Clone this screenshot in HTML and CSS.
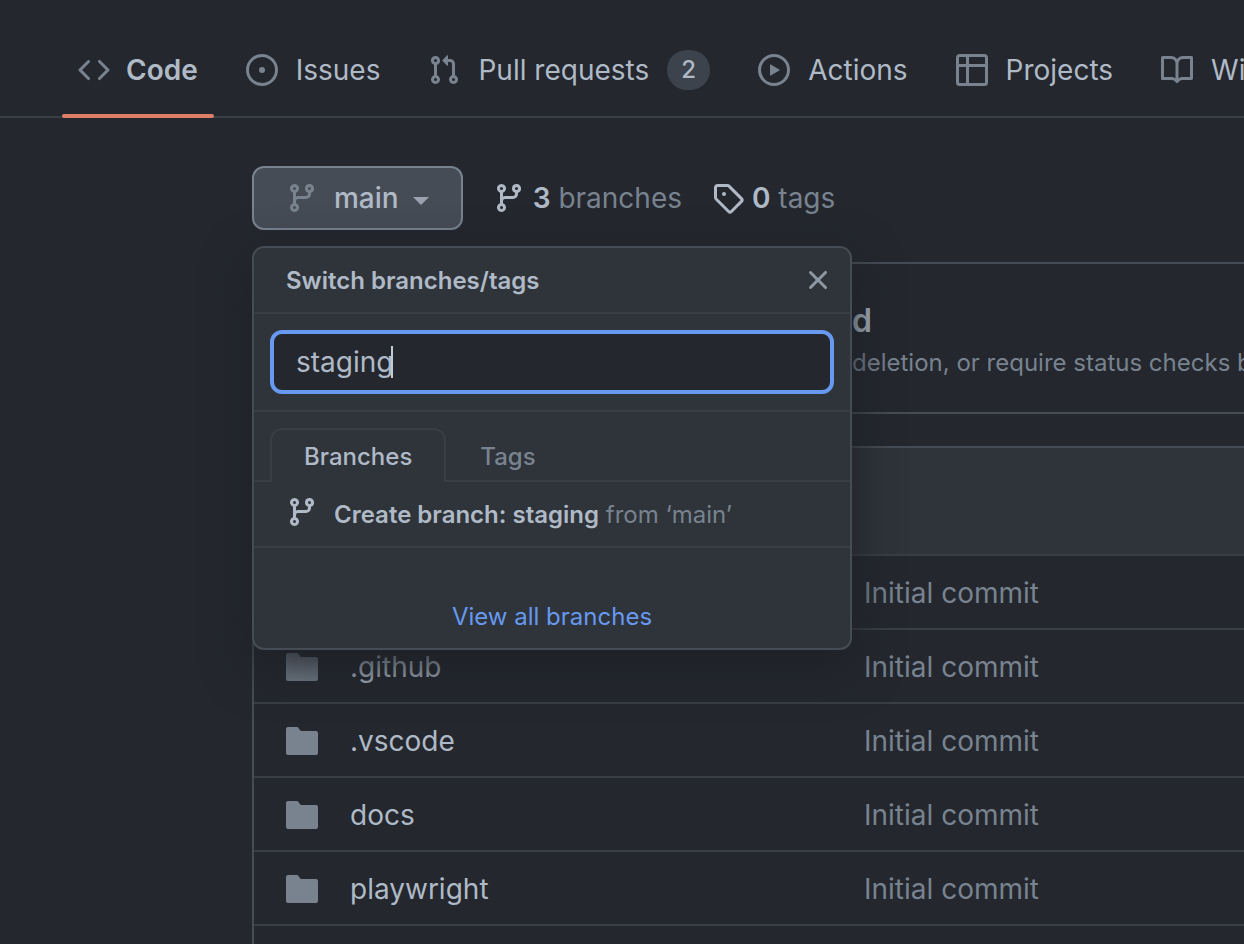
FILE: index.html
```html
<!DOCTYPE html>
<html lang="en">
<head>
<meta charset="utf-8">
<title>Code</title>
<link rel="stylesheet" href="styles.css">
</head>
<body>
<svg class="sprite" aria-hidden="true">
  <symbol id="code" viewBox="0 0 16 16"><path d="M4.72 3.22a.75.75 0 011.06 1.06L2.06 8l3.72 3.72a.75.75 0 11-1.06 1.06L.47 8.53a.75.75 0 010-1.06l4.25-4.25zm6.56 0a.75.75 0 10-1.06 1.06L13.94 8l-3.72 3.72a.75.75 0 101.06 1.06l4.25-4.25a.75.75 0 000-1.06l-4.25-4.25z"/></symbol>
  <symbol id="issue" viewBox="0 0 16 16"><path d="M8 9.5a1.5 1.5 0 100-3 1.5 1.5 0 000 3z"/><path d="M8 0a8 8 0 100 16A8 8 0 008 0zM1.5 8a6.5 6.5 0 1113 0 6.5 6.5 0 01-13 0z"/></symbol>
  <symbol id="pull" viewBox="0 0 16 16"><path d="M7.177 3.073L9.573.677A.25.25 0 0110 .854v4.792a.25.25 0 01-.427.177L7.177 3.427a.25.25 0 010-.354zM3.75 2.5a.75.75 0 100 1.5.75.75 0 000-1.5zm-2.25.75a2.25 2.25 0 113 2.122v5.256a2.251 2.251 0 11-1.5 0V5.372A2.25 2.25 0 011.5 3.25zM11 2.5h-1V4h1a1 1 0 011 1v5.628a2.251 2.251 0 101.5 0V5A2.5 2.5 0 0011 2.5zm1 10.25a.75.75 0 111.5 0 .75.75 0 01-1.5 0zM3.75 12a.75.75 0 100 1.5.75.75 0 000-1.5z"/></symbol>
  <symbol id="play" viewBox="0 0 16 16"><path d="M1.5 8a6.5 6.5 0 1113 0 6.5 6.5 0 01-13 0zM8 0a8 8 0 100 16A8 8 0 008 0zM6.379 5.227A.25.25 0 006 5.442v5.117a.25.25 0 00.379.214l4.264-2.559a.25.25 0 000-.428L6.379 5.227z"/></symbol>
  <symbol id="table" viewBox="0 0 16 16"><path d="M0 1.75C0 .784.784 0 1.75 0h12.5C15.216 0 16 .784 16 1.75v12.5A1.75 1.75 0 0114.25 16H1.75A1.75 1.75 0 010 14.25V1.75zM1.5 6.5v7.75c0 .138.112.25.25.25H5v-8H1.5zM6.5 6.5v8h7.75a.25.25 0 00.25-.25V6.5h-8zM14.5 5V1.75a.25.25 0 00-.25-.25H6.5V5h8zM5 5V1.5H1.75a.25.25 0 00-.25.25V5H5z"/></symbol>
  <symbol id="book" viewBox="0 0 16 16"><path d="M0 1.75A.75.75 0 01.75 1h4.253c1.227 0 2.317.59 3 1.501A3.744 3.744 0 0111.006 1h4.245a.75.75 0 01.75.75v10.5a.75.75 0 01-.75.75h-4.507a2.25 2.25 0 00-1.591.659l-.622.621a.75.75 0 01-1.06 0l-.622-.621A2.25 2.25 0 005.258 13H.75a.75.75 0 01-.75-.75V1.75zm8.755 3a2.25 2.25 0 012.25-2.25H14.5v9h-3.757c-.71 0-1.4.201-1.992.572l.004-7.322zm-1.504 7.324l.004-5.073-.002-2.253A2.25 2.25 0 005.003 2.5H1.5v9h3.757a3.75 3.75 0 011.994.574z"/></symbol>
  <symbol id="branch" viewBox="0 0 16 16"><path d="M11.75 2.5a.75.75 0 100 1.5.75.75 0 000-1.5zm-2.25.75a2.25 2.25 0 113 2.122V6A2.5 2.5 0 0110 8.5H6a1 1 0 00-1 1v1.128a2.251 2.251 0 11-1.5 0V5.372a2.25 2.25 0 111.5 0v1.836A2.492 2.492 0 016 7h4a1 1 0 001-1v-.628A2.25 2.25 0 019.5 3.25zM4.25 12a.75.75 0 100 1.5.75.75 0 000-1.5zM3.5 3.25a.75.75 0 111.5 0 .75.75 0 01-1.5 0z"/></symbol>
  <symbol id="tag" viewBox="0 0 16 16"><path d="M2.5 7.775V2.75a.25.25 0 01.25-.25h5.025a.25.25 0 01.177.073l6.25 6.25a.25.25 0 010 .354l-5.025 5.025a.25.25 0 01-.354 0l-6.25-6.25a.25.25 0 01-.073-.177zm-1.5 0V2.75C1 1.784 1.784 1 2.75 1h5.025c.464 0 .91.184 1.238.513l6.25 6.25a1.75 1.75 0 010 2.474l-5.026 5.026a1.75 1.75 0 01-2.474 0l-6.25-6.25A1.75 1.75 0 011 7.775zM6 5a1 1 0 100 2 1 1 0 000-2z"/></symbol>
  <symbol id="x" viewBox="0 0 16 16"><path d="M3.72 3.72a.75.75 0 011.06 0L8 6.94l3.22-3.22a.75.75 0 111.06 1.06L9.06 8l3.22 3.22a.75.75 0 11-1.06 1.06L8 9.06l-3.22 3.22a.75.75 0 01-1.06-1.06L6.94 8 3.72 4.78a.75.75 0 010-1.06z"/></symbol>
  <symbol id="folder" viewBox="0 0 16 16"><path d="M1 1a1 1 0 00-1 1v12a1 1 0 001 1h14a1 1 0 001-1V4a1 1 0 00-1-1H7.5a.25.25 0 01-.2-.1l-.9-1.2C6.07 1.26 5.8 1 5.25 1z"/></symbol>
</svg>

<nav class="repo-nav" aria-label="Repository">
  <a class="nav-item selected" href="#code"><svg class="icon"><use href="#code"/></svg>Code</a>
  <a class="nav-item" href="#issues"><svg class="icon"><use href="#issue"/></svg>Issues</a>
  <a class="nav-item" href="#pulls"><svg class="icon"><use href="#pull"/></svg>Pull requests<span class="counter">2</span></a>
  <a class="nav-item" href="#actions"><svg class="icon"><use href="#play"/></svg>Actions</a>
  <a class="nav-item" href="#projects"><svg class="icon"><use href="#table"/></svg>Projects</a>
  <a class="nav-item" href="#wiki"><svg class="icon"><use href="#book"/></svg>Wiki</a>
</nav>

<main class="content">
  <div class="toolbar">
    <div class="branch-picker">
      <button class="branch-button" type="button" aria-expanded="true"><svg class="icon"><use href="#branch"/></svg>main<span class="arrow"></span></button>

      <section class="popover" aria-label="Switch branches/tags">
        <header class="popover-header">
          <h2 class="popover-title">Switch branches/tags</h2>
          <button class="close" type="button" aria-label="Close"><svg class="icon"><use href="#x"/></svg></button>
        </header>
        <div class="filter">
          <input class="filter-input" type="text" value="staging" aria-label="Find or create a branch">
          <span class="text-cursor"></span>
        </div>
        <div class="tabs" role="tablist">
          <button class="tab active" type="button" role="tab" aria-selected="true">Branches</button>
          <button class="tab" type="button" role="tab" aria-selected="false">Tags</button>
        </div>
        <button class="create" type="button"><svg class="icon"><use href="#branch"/></svg><span class="create-label"><strong>Create branch: staging</strong> from ‘main’</span></button>
        <footer class="popover-footer"><a class="view-all" href="#branches">View all branches</a></footer>
      </section>
    </div>
    <a class="stat" href="#branches"><svg class="icon"><use href="#branch"/></svg><span><strong>3</strong> branches</span></a>
    <a class="stat" href="#tags"><svg class="icon"><use href="#tag"/></svg><span><strong>0</strong> tags</span></a>
  </div>

  <section class="notice">
    <h3 class="notice-title">d</h3>
    <p class="notice-text">deletion, or require status checks before</p>
  </section>

  <section class="files">
    <div class="files-header"></div>
    <table class="file-table">
      <colgroup><col class="col-icon"><col class="col-name"><col></colgroup>
      <tbody>
        <tr><td></td><td></td><td><a class="commit" href="#commit">Initial commit</a></td></tr>
        <tr><td><svg class="icon"><use href="#folder"/></svg></td><td><a class="file" href="#github">.github</a></td><td><a class="commit" href="#commit">Initial commit</a></td></tr>
        <tr><td><svg class="icon"><use href="#folder"/></svg></td><td><a class="file" href="#vscode">.vscode</a></td><td><a class="commit" href="#commit">Initial commit</a></td></tr>
        <tr><td><svg class="icon"><use href="#folder"/></svg></td><td><a class="file" href="#docs">docs</a></td><td><a class="commit" href="#commit">Initial commit</a></td></tr>
        <tr><td><svg class="icon"><use href="#folder"/></svg></td><td><a class="file" href="#playwright">playwright</a></td><td><a class="commit" href="#commit">Initial commit</a></td></tr>
        <tr><td></td><td></td><td></td></tr>
      </tbody>
    </table>
  </section>
</main>
</body>
</html>
```
FILE: styles.css
```css
:root {
  --bg: #24272e;
  --overlay: #2f333a;
  --border: #464c55;
  --border-muted: #393e46;
  --text: #afbac6;
  --muted: #78838f;
  --blue: #6699ef;
}

* { box-sizing: border-box; }

html { height: 100%; overflow: hidden; }

body {
  margin: 0;
  height: 100%;
  overflow: hidden;
  background: var(--bg);
  color: var(--text);
  font-family: Inter, "Noto Sans", sans-serif;
  font-size: 28px;
  line-height: 40px;
}

a { color: inherit; text-decoration: none; }
button, input { font: inherit; color: inherit; }
h2, h3, p { margin: 0; }
strong { font-weight: 600; }

.sprite { display: none; }

.icon {
  display: block;
  flex: none;
  width: 32px;
  height: 32px;
  fill: currentColor;
  fill-rule: evenodd;
}

/* Repository navigation */
.repo-nav {
  display: flex;
  gap: 16px;
  padding: 24px 0 0 62px;
  border-bottom: 2px solid var(--border-muted);
  white-space: nowrap;
}

.nav-item {
  position: relative;
  display: flex;
  flex: none;
  align-items: center;
  gap: 18px;
  height: 92px;
  padding: 0 16px;
}

.nav-item .icon { color: var(--muted); }
.nav-item.selected { gap: 16px; font-weight: 600; }

.nav-item.selected::after {
  content: "";
  position: absolute;
  left: 0;
  right: 0;
  bottom: -2px;
  height: 4px;
  border-radius: 2px;
  background: #de7f65;
}

.counter {
  min-width: 43px;
  padding: 0 12px;
  border-radius: 20px;
  background: #3d434c;
  font-size: 24px;
  font-weight: 500;
  text-align: center;
}

/* Toolbar */
.content { padding: 48px 0 0 252px; }

.toolbar {
  display: flex;
  align-items: center;
  gap: 30px;
}

.branch-picker { position: relative; }

.branch-button {
  display: flex;
  align-items: center;
  gap: 16px;
  height: 64px;
  padding: 0 32px;
  border: 2px solid var(--muted);
  border-radius: 12px;
  background: #464c55;
  font-weight: 500;
}

.branch-button .icon { color: var(--muted); }

.arrow {
  margin: 6px 0 0 -2px;
  border: 8px solid transparent;
  border-top-color: #9aa1af;
  border-bottom: 0;
}

.stat {
  display: flex;
  align-items: center;
  gap: 8px;
  color: var(--muted);
}

.stat .icon, .stat strong { color: var(--text); }

/* Branch popover */
.popover {
  position: absolute;
  z-index: 1;
  top: 80px;
  left: 0;
  width: 600px;
  border: 2px solid var(--border);
  border-radius: 12px;
  background: var(--overlay);
  box-shadow: 0 16px 48px #1e2127;
  font-size: 24px;
}

.popover-header {
  display: flex;
  align-items: center;
  justify-content: space-between;
  height: 66px;
  padding: 0 16px 0 32px;
  border-bottom: 2px solid var(--border-muted);
}

.popover-title { padding-top: 2px; font-size: 24px; font-weight: 600; }

.close {
  padding: 0;
  border: 0;
  background: none;
  color: #8e98a3;
}

.filter {
  position: relative;
  padding: 16px;
  border-bottom: 2px solid var(--border-muted);
}

.filter-input {
  display: block;
  width: 100%;
  height: 64px;
  padding: 0 22px;
  border: 4px solid var(--blue);
  border-radius: 12px;
  outline: 0;
  background: var(--bg);
  font-size: 28px;
}

.text-cursor {
  position: absolute;
  top: 32px;
  left: 137px;
  width: 2px;
  height: 32px;
  background: #c3ccd6;
}

.tabs {
  display: flex;
  padding: 16px 16px 0;
  box-shadow: inset 0 -2px var(--border-muted);
}

.tab {
  height: 54px;
  padding: 2px 32px 0;
  border: 2px solid transparent;
  border-bottom: 0;
  background: none;
  color: var(--muted);
  font-weight: 500;
}

.tab.active {
  border-color: var(--border-muted);
  border-radius: 12px 12px 0 0;
  background: var(--overlay);
  color: var(--text);
}

.create {
  display: flex;
  align-items: center;
  gap: 16px;
  width: 100%;
  height: 66px;
  padding: 0 32px;
  border: 0;
  border-bottom: 2px solid var(--border-muted);
  background: none;
  color: var(--muted);
}

.create .icon { margin-bottom: 4px; }
.create .icon, .create strong { color: var(--text); }
.create-label { padding-top: 2px; }

.popover-footer { padding: 49px 16px 11px; text-align: center; }
.view-all { color: var(--blue); }

/* Branch protection notice */
.notice {
  height: 152px;
  margin-top: 32px;
  padding: 37px 0 0 598px;
  border: 2px solid var(--border);
  border-right: 0;
  border-radius: 12px 0 0 12px;
  overflow: hidden;
  white-space: nowrap;
}

.notice-title { font-size: 32px; font-weight: 600; }

.notice-text {
  padding-top: 2px;
  color: var(--muted);
  font-size: 24px;
}

/* File list */
.files {
  margin-top: 32px;
  border: 2px solid var(--border);
  border-width: 2px 0 0 2px;
  border-radius: 12px 0 0 0;
  overflow: hidden;
}

.files-header { height: 106px; background: var(--overlay); }

.file-table {
  width: 100%;
  table-layout: fixed;
  border-collapse: separate;
  border-spacing: 0;
}

.col-icon { width: 96px; }
.col-name { width: 514px; }

.file-table td {
  height: 74px;
  padding: 2px 0 0;
  border-top: 2px solid var(--border-muted);
}

.file-table .icon { margin-left: 32px; color: var(--muted); }
.commit { color: var(--muted); }
```
